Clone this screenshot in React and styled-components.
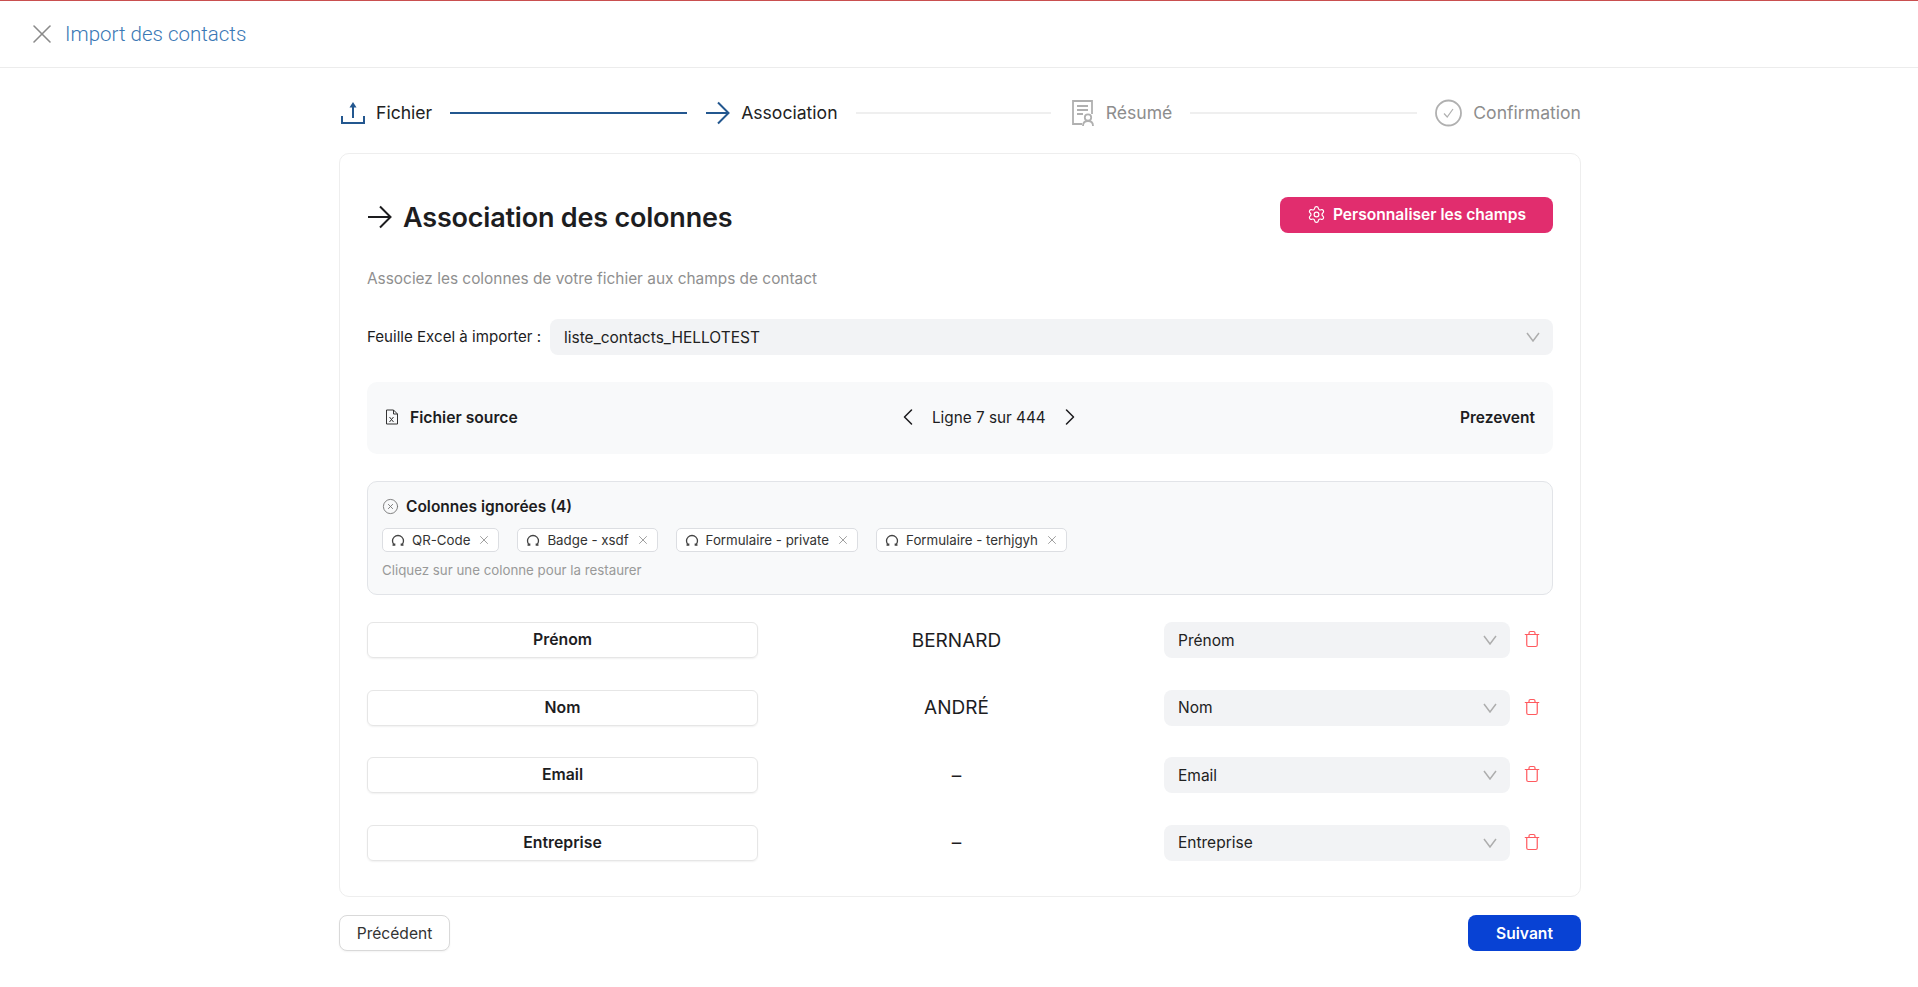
import styled, { createGlobalStyle } from 'styled-components'
import { ChevronLeft, ChevronRight, CircleX, Settings, Trash, X } from 'lucide-react'

const GlobalStyle = createGlobalStyle`
  * { box-sizing: border-box; }
  html, body { margin: 0; background: #fff; }
  body { font-family: Inter, "Noto Sans", sans-serif; color: #1d1d1f; }
`

const Page = styled.div`
  min-height: 987px;
  border-top: 1px solid #c94f4f;
`

const TopBar = styled.header`
  display: flex;
  align-items: center;
  gap: 7px;
  height: 67px;
  padding-left: 26px;
  border-bottom: 1px solid #ececec;
  color: #8a8a8a;
`

const TopTitle = styled.h1`
  margin: 0;
  font: 300 20.5px Roboto, sans-serif;
  color: #3a78b5;
`

const Main = styled.main`
  width: 1242px;
  margin-left: 339px;
`

const Stepper = styled.nav`
  display: flex;
  align-items: center;
  height: 85px;
  padding-top: 4px;
`

const Step = styled.div`
  display: flex;
  align-items: center;
  gap: 11px;
  font-size: 17.6px;
  color: ${p => (p.$muted ? '#8d8d8d' : '#222')};
  svg { color: ${p => (p.$muted ? '#b0b0b0' : '#23578f')}; }
`

const StepLine = styled.span`
  flex: ${p => p.$grow} 1 0;
  height: 2px;
  margin: 0 18px;
  background: ${p => (p.$done ? '#23578f' : '#efefef')};
`

const Card = styled.section`
  height: 744px;
  padding: 28px 27px;
  border: 1px solid #eeeeee;
  border-radius: 10px;
`

const CardHead = styled.div`
  display: flex;
  align-items: center;
  justify-content: space-between;
  margin-top: 15px;
  height: 36px;
`

const CardTitle = styled.h2`
  display: flex;
  align-items: center;
  gap: 11px;
  margin: 4px 0 0;
  font-size: 27px;
  font-weight: 600;
  letter-spacing: -0.2px;
`

const PinkButton = styled.button`
  display: flex;
  align-items: center;
  justify-content: center;
  gap: 7px;
  width: 273px;
  height: 36px;
  padding: 0 0 2px;
  border: 0;
  border-radius: 8px;
  background: #e12d6e;
  color: #fff;
  font: 600 15.6px Inter, sans-serif;
`

const Subtitle = styled.p`
  margin: 37px 0 0;
  font-size: 15.4px;
  line-height: 18px;
  color: #8f8f8f;
`

const SheetRow = styled.div`
  display: flex;
  align-items: center;
  margin-top: 31px;
  font-size: 15.5px;
`

const SheetLabel = styled.span`
  flex: 0 0 183px;
  padding-bottom: 2px;
  font-size: 15.1px;
  white-space: nowrap;
`

const Select = styled.div`
  flex: 1;
  display: flex;
  align-items: center;
  justify-content: space-between;
  height: 36px;
  padding: 0 13px 0 14px;
  border-radius: 8px;
  background: #f2f3f5;
  font-size: 15.5px;
  color: #222;
  svg { color: #adadad; }
`

const SourceBox = styled.div`
  display: flex;
  align-items: center;
  justify-content: space-between;
  height: 72px;
  margin-top: 27px;
  padding: 0 18px 2px;
  border-radius: 10px;
  background: #f8f9fa;
  font-size: 15.5px;
`

const SourceName = styled.div`
  display: flex;
  align-items: center;
  gap: 11px;
  font-size: 15.7px;
  font-weight: 600;
`

const Pager = styled.div`
  display: flex;
  align-items: center;
  gap: 10px;
  font-size: 15.3px;
`

const SourceTag = styled.div`
  font-weight: 600;
`

const IgnoredBox = styled.div`
  height: 114px;
  margin-top: 27px;
  padding: 15px 14px;
  border: 1px solid #e2e4e8;
  border-radius: 10px;
  background: #f8f9fa;
`

const IgnoredTitle = styled.div`
  display: flex;
  align-items: center;
  gap: 7px;
  font-size: 15.5px;
  font-weight: 600;
  svg { color: #777; }
`

const Chips = styled.div`
  display: flex;
  gap: 18px;
  margin-top: 12px;
`

const Chip = styled.div`
  display: flex;
  align-items: center;
  gap: 7px;
  height: 24px;
  padding: 0 7px 0 8px;
  border: 1px solid #dcdee2;
  border-radius: 5px;
  background: #fff;
  font-size: 13.3px;
  color: #333;
  svg { color: #444; }
  svg:last-child { color: #777; }
`

const Hint = styled.div`
  margin-top: 10px;
  font-size: 13.3px;
  color: #999;
`

const Rows = styled.div`
  display: grid;
  row-gap: 31.5px;
  margin-top: 27px;
`

const Row = styled.div`
  display: grid;
  grid-template-columns: 391px 1fr 346px 43px;
  align-items: center;
`

const FieldName = styled.div`
  display: flex;
  align-items: center;
  justify-content: center;
  height: 36px;
  padding-bottom: 1px;
  border: 1px solid #e6e6e6;
  border-radius: 6px;
  box-shadow: 0 1px 2px rgba(0, 0, 0, 0.06);
  font-size: 15.8px;
  font-weight: 600;
`

const Sample = styled.div`
  padding-right: 9px;
  text-align: center;
  font-size: 19px;
`

const TrashButton = styled.div`
  display: flex;
  justify-content: center;
  padding-bottom: 2px;
  color: #ff5a5f;
`

const Footer = styled.footer`
  display: flex;
  justify-content: space-between;
  margin-top: 18px;
`

const BackButton = styled.button`
  width: 111px;
  height: 36px;
  border: 1px solid #d9d9d9;
  border-radius: 8px;
  background: #fff;
  box-shadow: 0 1px 2px rgba(0, 0, 0, 0.05);
  font: 400 15.6px Inter, sans-serif;
  color: #333;
`

const NextButton = styled.button`
  width: 113px;
  height: 36px;
  border: 0;
  border-radius: 8px;
  background: #0842d4;
  color: #fff;
  font: 600 15.6px Inter, sans-serif;
`

function UploadIcon() {
  return (
    <svg width='26' height='24' viewBox='-2 0 26 24' fill='none' stroke='currentColor' strokeWidth='2'>
      <path d='M1 15v7h22v-7' />
      <path d='M12 17V3' />
      <path d='M12 1 8.5 6.5h7z' fill='currentColor' stroke='none' />
    </svg>
  )
}

function LongArrow() {
  return (
    <svg width='25' height='24' viewBox='0 0 25 24' fill='none' stroke='currentColor' strokeWidth='2'>
      <path d='M1 12h22' />
      <path d='M13 1.5 23.500 12 13 22.5' />
    </svg>
  )
}

function SummaryIcon() {
  return (
    <svg width='26' height='27' viewBox='-2 0 26 27' fill='none' stroke='currentColor' strokeWidth='1.8'>
      <path d='M11 25H2V2h19v13' />
      <path d='M6 7h11M6 11h11M6 15h6' />
      <circle cx='17' cy='18.5' r='3.2' />
      <path d='M12 27c0-3 2-5 5-5s5 2 5 5' />
    </svg>
  )
}

function CheckCircleIcon() {
  return (
    <svg width='27' height='28' viewBox='0 0 27 28' fill='none' stroke='currentColor'>
      <circle cx='13.5' cy='14' r='12.5' strokeWidth='1.8' />
      <path d='m9 14.5 3.2 3.5 5.8-8' strokeWidth='1.2' />
    </svg>
  )
}

function ExcelFileIcon() {
  return (
    <svg width='14' height='16' viewBox='0 0 14 16' fill='none' stroke='#333' strokeWidth='1'>
      <path d='M1.5 1h7l4 4v10h-11z' />
      <path d='M8.5 1v4h4' />
      <path d='m4.5 8 4 5M8.5 8l-4 5' />
    </svg>
  )
}

function SelectChevron() {
  return (
    <svg width='14' height='10' viewBox='0 0 14 10' fill='none' stroke='currentColor' strokeWidth='1.5'>
      <path d='M1 1l6 8 6-8' />
    </svg>
  )
}

function RestoreIcon() {
  return (
    <svg width='14' height='14' viewBox='0 0 14 14' fill='none' stroke='currentColor' strokeWidth='1.3'>
      <path d='M3.2 12A5.5 5.5 0 1 1 10.8 12' />
      <path d='M1.5 12h2.2v-1.5M12.5 12h-2.2v-1.5' />
    </svg>
  )
}

const ignored = ['QR-Code', 'Badge - xsdf', 'Formulaire - private', 'Formulaire - terhjgyh']

const mappings = [
  { name: 'Prénom', sample: 'BERNARD' },
  { name: 'Nom', sample: 'ANDRÉ' },
  { name: 'Email', sample: '–' },
  { name: 'Entreprise', sample: '–' },
]

function App() {
  return (
    <Page>
      <GlobalStyle />
      <TopBar>
        <X size={32} strokeWidth={1.2} />
        <TopTitle>Import des contacts</TopTitle>
      </TopBar>
      <Main>
        <Stepper>
          <Step><UploadIcon /> Fichier</Step>
          <StepLine $done $grow={238} />
          <Step><LongArrow /> Association</Step>
          <StepLine $grow={196} />
          <Step $muted><SummaryIcon /> Résumé</Step>
          <StepLine $grow={228} />
          <Step $muted><CheckCircleIcon /> Confirmation</Step>
        </Stepper>
        <Card>
          <CardHead>
            <CardTitle><LongArrow /> Association des colonnes</CardTitle>
            <PinkButton><Settings size={19} strokeWidth={1.5} /> Personnaliser les champs</PinkButton>
          </CardHead>
          <Subtitle>Associez les colonnes de votre fichier aux champs de contact</Subtitle>
          <SheetRow>
            <SheetLabel>Feuille Excel à importer :</SheetLabel>
            <Select>liste_contacts_HELLOTEST <SelectChevron /></Select>
          </SheetRow>
          <SourceBox>
            <SourceName><ExcelFileIcon /> Fichier source</SourceName>
            <Pager>
              <ChevronLeft size={28} strokeWidth={1.3} />
              Ligne 7 sur 444
              <ChevronRight size={28} strokeWidth={1.3} />
            </Pager>
            <SourceTag>Prezevent</SourceTag>
          </SourceBox>
          <IgnoredBox>
            <IgnoredTitle><CircleX size={17} strokeWidth={1.3} /> Colonnes ignorées (4)</IgnoredTitle>
            <Chips>
              {ignored.map(label => (
                <Chip key={label}>
                  <RestoreIcon />
                  {label}
                  <X size={14} strokeWidth={1.2} />
                </Chip>
              ))}
            </Chips>
            <Hint>Cliquez sur une colonne pour la restaurer</Hint>
          </IgnoredBox>
          <Rows>
            {mappings.map(m => (
              <Row key={m.name}>
                <FieldName>{m.name}</FieldName>
                <Sample>{m.sample}</Sample>
                <Select>{m.name} <SelectChevron /></Select>
                <TrashButton><Trash size={18} strokeWidth={1.6} /></TrashButton>
              </Row>
            ))}
          </Rows>
        </Card>
        <Footer>
          <BackButton>Précédent</BackButton>
          <NextButton>Suivant</NextButton>
        </Footer>
      </Main>
    </Page>
  )
}

export default App
